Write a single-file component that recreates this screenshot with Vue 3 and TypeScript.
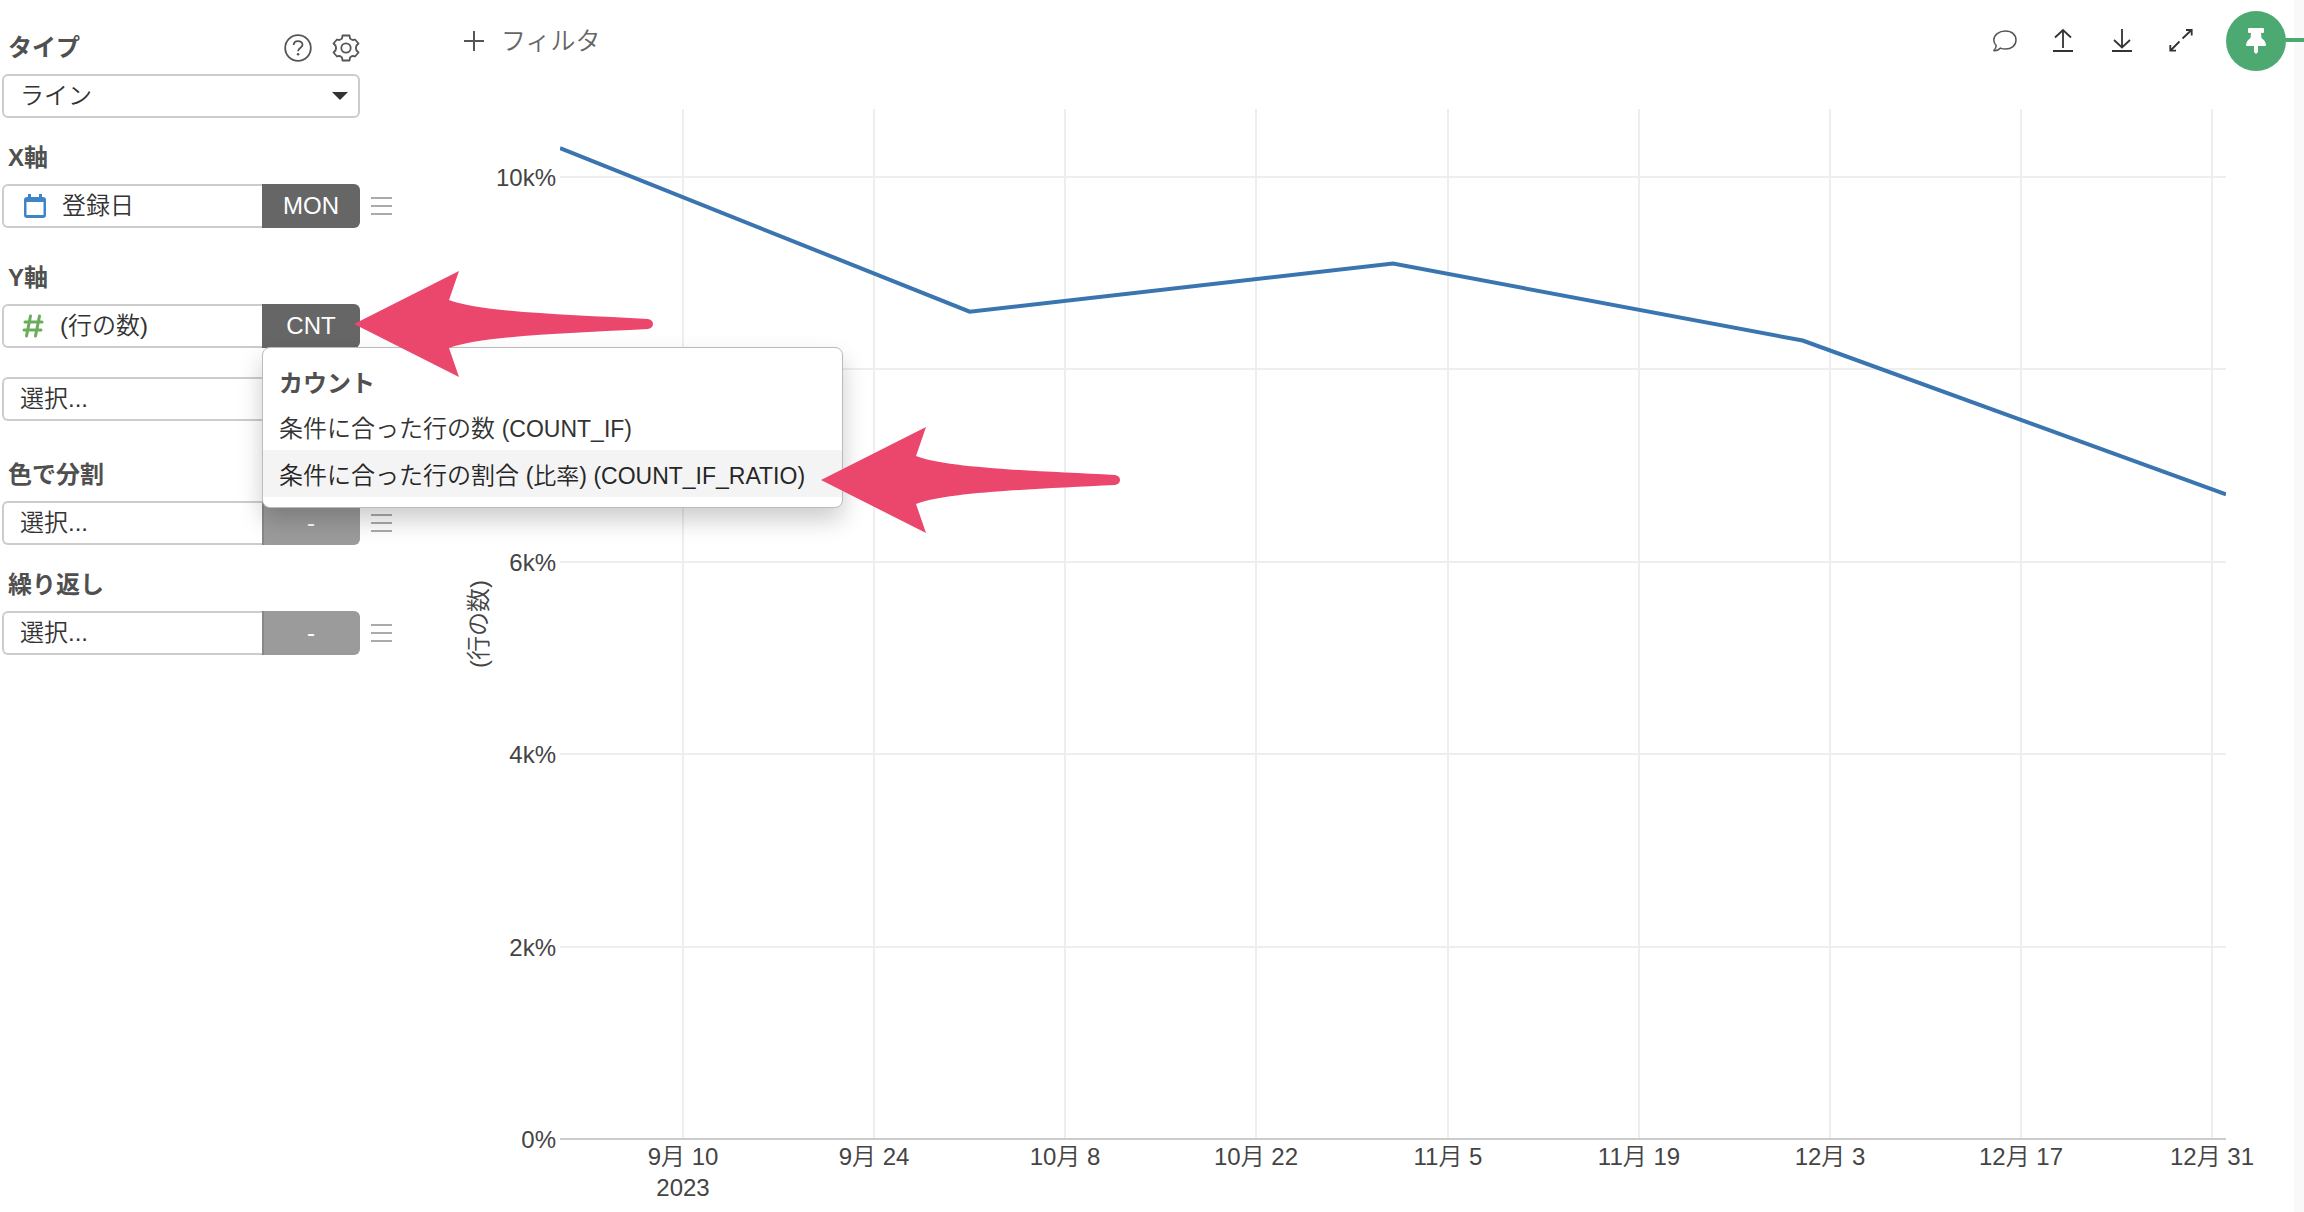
<script setup lang="ts">
import { computed, onBeforeUnmount, onMounted, ref } from 'vue'

interface Point {
  day: number
  value: number
}

const chartType = ref('line')
const chartBox = ref<HTMLElement | null>(null)
const width = ref(1874)
const height = ref(1130)
const margin = { top: 27, right: 68, bottom: 73, left: 140 }

// Days are counted from 2023-09-01.
const points: Point[] = [
  { day: 0, value: 10300 },
  { day: 30, value: 8600 },
  { day: 61, value: 9100 },
  { day: 91, value: 8300 },
  { day: 122, value: 6700 },
]
const xLabels = ['9月 10', '9月 24', '10月 8', '10月 22', '11月 5', '11月 19', '12月 3', '12月 17', '12月 31']
const maxDay = 122
const maxValue = 10707

const plotRight = computed(() => width.value - margin.right)
const plotBottom = computed(() => height.value - margin.bottom)
const plotWidth = computed(() => plotRight.value - margin.left)
const plotHeight = computed(() => plotBottom.value - margin.top)

const xAt = (day: number) => margin.left + (day / maxDay) * plotWidth.value
const yAt = (value: number) => plotBottom.value - (value / maxValue) * plotHeight.value

const xTicks = computed(() => xLabels.map((label, i) => ({ label, x: Math.round(xAt(9 + i * 14)) })))
const yTicks = computed(() =>
  [0, 2, 4, 6, 8, 10].map((k) => ({ label: k ? `${k}k%` : '0%', y: Math.round(yAt(k * 1000)), zero: k === 0 })),
)
const linePoints = computed(() => points.map((p) => `${xAt(p.day)},${yAt(p.value)}`).join(' '))

let observer: ResizeObserver | undefined
onMounted(() => {
  const el = chartBox.value
  if (!el) return
  const measure = () => {
    width.value = el.clientWidth
    height.value = el.clientHeight
  }
  measure()
  observer = new ResizeObserver(measure)
  observer.observe(el)
})
onBeforeUnmount(() => observer?.disconnect())

const arrowPath =
  'M0 53 L105 0 L95 29 C125 41 215 44 294 48 Q299 49 299 53 Q299 57 294 58 C215 62 125 65 95 77 L105 106 Z'
</script>

<template>
  <div class="page">
    <aside class="sidebar">
      <section class="group">
        <div class="head">
          <label class="title" for="chart-type">タイプ</label>
          <div class="tools">
            <button type="button" class="tool" aria-label="ヘルプ">
              <svg width="28" height="28" viewBox="0 0 28 28" fill="none" stroke="#555" stroke-width="1.8">
                <circle cx="14" cy="14" r="12.8" />
                <path d="M9.7 11 C9.7 5.8 18.5 5.9 18.5 10.7 C18.5 13.8 14.1 13.6 14.1 17.3" />
                <circle cx="14.1" cy="20.3" r="1.3" fill="#555" stroke="none" />
              </svg>
            </button>
            <button type="button" class="tool" aria-label="設定">
              <svg width="28" height="28" viewBox="0 0 28 28" fill="none" stroke="#555" stroke-width="1.8" stroke-linejoin="round">
                <circle cx="14" cy="14" r="4.7" />
                <path d="M10.5 1.5 H17.5 L18 4.5 Q20 6.8 23 5.5 L26.5 9.5 L24.5 11.5 Q23.3 14 24.5 16.5 L26.5 18.5 L23 22.5 Q20 21.2 18 23.5 L17.5 26.5 H10.5 L10 23.5 Q8 21.2 5 22.5 L1.5 18.5 L3.5 16.5 Q4.7 14 3.5 11.5 L1.5 9.5 L5 5.5 Q8 6.8 10 4.5 Z" />
              </svg>
            </button>
          </div>
        </div>
        <div class="row">
          <div class="field">
            <select id="chart-type" v-model="chartType" class="pick">
              <option value="line">ライン</option>
            </select>
            <svg class="caret" width="16" height="8" viewBox="0 0 16 8"><path d="M0 0 H16 L8 8 Z" fill="#333" /></svg>
          </div>
        </div>
      </section>

      <section class="group">
        <div class="head"><label class="title" for="x-column">X軸</label></div>
        <div class="row">
          <div class="field split">
            <svg class="kind" width="22" height="26" viewBox="0 0 22 26">
              <path d="M4 1 h3 v3 h8 v-3 h3 v3 h1 a3 3 0 0 1 3 3 v15 a3 3 0 0 1 -3 3 h-16 a3 3 0 0 1 -3 -3 v-15 a3 3 0 0 1 3 -3 h1 Z M2.5 9 v13 h17 v-13 Z" fill="#3d85c8" fill-rule="evenodd" />
            </svg>
            <select id="x-column" class="pick"><option>登録日</option></select>
          </div>
          <button type="button" class="agg">MON</button>
          <button type="button" class="grip" aria-label="X軸メニュー"><i></i><i></i><i></i></button>
        </div>
      </section>

      <section class="group y-group">
        <div class="head"><label class="title" for="y-column">Y軸</label></div>
        <div class="row">
          <div class="field split">
            <svg class="kind number" width="22" height="26" viewBox="0 0 22 26" fill="none" stroke="#69ad5a" stroke-width="3" stroke-linecap="round">
              <path d="M8.5 3 L4.5 23 M17.5 3 L13.5 23 M3 9 H20 M2 17 H19" />
            </svg>
            <select id="y-column" class="pick"><option>(行の数)</option></select>
          </div>
          <div class="agg-wrap">
            <button type="button" class="agg" aria-haspopup="menu" aria-expanded="true">CNT</button>
            <div class="menu" role="menu">
              <div class="menu-title">カウント</div>
              <button type="button" role="menuitem" class="menu-item">
                条件に合った行の数 <span class="func">(COUNT_IF)</span>
              </button>
              <button type="button" role="menuitem" class="menu-item active">
                条件に合った行の割合 <span class="func">(比率) (COUNT_IF_RATIO)</span>
              </button>
              <svg class="arrow to-item" width="299" height="106" viewBox="0 0 299 106"><path :d="arrowPath" fill="#eb466c" /></svg>
            </div>
            <svg class="arrow to-badge" width="299" height="106" viewBox="0 0 299 106"><path :d="arrowPath" fill="#eb466c" /></svg>
          </div>
        </div>
        <div class="row extra">
          <div class="field split">
            <select class="pick" aria-label="Y軸の列を追加"><option>選択...</option></select>
          </div>
          <button type="button" class="agg empty" aria-label="集計なし"></button>
        </div>
      </section>

      <section class="group color-group">
        <div class="head"><label class="title" for="color-column">色で分割</label></div>
        <div class="row">
          <div class="field split">
            <select id="color-column" class="pick"><option>選択...</option></select>
          </div>
          <button type="button" class="agg empty">-</button>
          <button type="button" class="grip" aria-label="色メニュー"><i></i><i></i><i></i></button>
        </div>
      </section>

      <section class="group">
        <div class="head"><label class="title" for="repeat-column">繰り返し</label></div>
        <div class="row">
          <div class="field split">
            <select id="repeat-column" class="pick"><option>選択...</option></select>
          </div>
          <button type="button" class="agg empty">-</button>
          <button type="button" class="grip" aria-label="繰り返しメニュー"><i></i><i></i><i></i></button>
        </div>
      </section>
    </aside>

    <main class="main">
      <header class="bar">
        <button type="button" class="filter">
          <svg width="20" height="20" viewBox="0 0 20 20" stroke="#555" stroke-width="2"><path d="M0 10 H20 M10 0 V20" /></svg>
          <span>フィルタ</span>
        </button>
        <div class="actions">
          <button type="button" class="icon-btn" aria-label="コメント">
            <svg width="26" height="24" viewBox="0 0 26 24" fill="none" stroke="#555" stroke-width="1.5" stroke-linejoin="round">
              <path d="M14.5 2 C21 2 25 6 25 11 C25 16.5 20.5 20 14.5 20 C12.5 20 11 19.7 9.5 19.1 C7.5 21 5 21.9 2.8 21.6 C4.5 20 5.200 18.3 5.200 16.5 C3.7 15 2.8 13 2.8 11 C2.8 6 8 2 14.5 2 Z" />
            </svg>
          </button>
          <button type="button" class="icon-btn" aria-label="アップロード">
            <svg width="20" height="24" viewBox="0 0 20 24" fill="none" stroke="#333" stroke-width="1.8">
              <path d="M10 19 V1 M2 8.5 L10 1 L18 8.5 M0 22 H20" />
            </svg>
          </button>
          <button type="button" class="icon-btn" aria-label="ダウンロード">
            <svg width="20" height="24" viewBox="0 0 20 24" fill="none" stroke="#333" stroke-width="1.8">
              <path d="M10 0 V18 M2 11 L10 18.5 L18 11 M0 22 H20" />
            </svg>
          </button>
          <button type="button" class="icon-btn" aria-label="拡大">
            <svg width="24" height="24" viewBox="0 0 24 24" fill="none" stroke="#333" stroke-width="1.8">
              <path d="M13.5 9.5 L22.5 1 M17 1 H22.7 V6.5 M10.5 12.5 L1.5 21.5 M1.3 16 V21.7 H7" />
            </svg>
          </button>
          <button type="button" class="pin" aria-label="ピン留め">
            <svg width="20" height="26" viewBox="0 0 20 26" fill="#fff">
              <path d="M3 0 H17 Q18 0 18 1 V4 Q18 5 17 5 H15 L15.5 10 Q19.5 12.5 20 17 Q20 18 19 18 H12 V24 L10 26 L8 24 V18 H1 Q0 18 0 17 Q0.5 12.5 4.5 10 L5 5 H3 Q2 5 2 4 V1 Q2 0 3 0 Z" />
            </svg>
          </button>
        </div>
      </header>
      <div ref="chartBox" class="chart">
        <svg class="plot" :width="width" :height="height" role="img" aria-label="(行の数)">
          <line v-for="t in xTicks" :key="t.label" class="grid" :x1="t.x" :x2="t.x" :y1="margin.top" :y2="plotBottom" />
          <line
            v-for="t in yTicks"
            :key="t.label"
            :class="t.zero ? 'zero' : 'grid'"
            :x1="margin.left"
            :x2="plotRight"
            :y1="t.y"
            :y2="t.y"
          />
          <text v-for="t in yTicks" :key="t.label" class="tick" text-anchor="end" :x="margin.left - 4" :y="t.y + 9">{{ t.label }}</text>
          <text v-for="t in xTicks" :key="t.label" class="tick" text-anchor="middle" :x="t.x" :y="plotBottom + 26">{{ t.label }}</text>
          <text class="tick" text-anchor="middle" :x="xTicks[0].x" :y="plotBottom + 57">2023</text>
          <text class="tick" text-anchor="middle" :transform="`translate(67 ${(margin.top + plotBottom) / 2}) rotate(-90)`">(行の数)</text>
          <clipPath id="plot-area">
            <rect :x="margin.left" :y="margin.top" :width="plotWidth" :height="plotHeight" />
          </clipPath>
          <polyline class="series" :points="linePoints" clip-path="url(#plot-area)" />
        </svg>
      </div>
    </main>
    <div class="rail"></div>
  </div>
</template>

<style>
body {
  background: #fff;
}
</style>

<style scoped>
.page,
.page * {
  box-sizing: border-box;
}
.page {
  display: flex;
  min-height: 100vh;
  font-family: 'Liberation Sans', 'Noto Sans CJK JP', sans-serif;
  font-size: 24px;
  font-weight: 350;
  line-height: 30px;
  color: #333;
}
button,
select {
  font: inherit;
  color: inherit;
  margin: 0;
  padding: 0;
  border: 0;
  background: none;
}
svg {
  display: block;
  flex: none;
}
.sidebar {
  position: relative;
  z-index: 2;
  flex: none;
  width: 420px;
  padding: 33px 28px 0 2px;
}
.group {
  margin-bottom: 25px;
}
.y-group {
  margin-top: 35px;
}
.color-group {
  margin-top: 39px;
}
.head {
  display: flex;
  justify-content: space-between;
  width: 358px;
  height: 30px;
  margin-bottom: 11px;
  padding-left: 6px;
}
.title,
.menu-title {
  font-weight: 700;
  color: #505050;
}
.tools {
  display: flex;
  align-items: center;
  gap: 20px;
}
.tool {
  display: flex;
}
.row {
  display: flex;
  align-items: center;
  height: 44px;
}
.extra {
  margin-top: 29px;
}
.field {
  display: flex;
  align-items: center;
  position: relative;
  width: 358px;
  height: 44px;
  border: 2px solid #ccc;
  border-radius: 6px;
}
.field.split {
  width: 260px;
  border-right: 0;
  border-radius: 6px 0 0 6px;
}
.pick {
  appearance: none;
  flex: 1;
  min-width: 0;
  height: 40px;
  padding-left: 16px;
  outline: 0;
}
.caret {
  position: absolute;
  right: 10px;
  pointer-events: none;
}
.kind {
  margin-left: 20px;
}
.kind.number {
  margin-left: 18px;
}
.agg-wrap {
  position: relative;
}
.agg {
  display: block;
  width: 98px;
  height: 44px;
  border-radius: 0 6px 6px 0;
  background: #666;
  color: #fff;
  text-align: center;
}
.agg.empty {
  background: #9b9b9b;
  box-shadow: inset 2px 0 #888;
}
.grip {
  display: flex;
  flex-direction: column;
  gap: 6px;
  width: 21px;
  margin-left: 11px;
}
.grip i {
  height: 2px;
  background: #aaa;
}
.menu {
  position: absolute;
  z-index: 1;
  top: 43px;
  left: 0;
  width: 581px;
  padding: 8px 0 10px;
  border: 1px solid #bbb;
  border-radius: 8px;
  background: #fff;
  box-shadow: 0 12px 24px rgba(0, 0, 0, 0.2);
  white-space: nowrap;
}
.menu-title {
  height: 47px;
  padding: 13px 16px 4px;
}
.menu-item {
  display: block;
  width: 100%;
  height: 47px;
  padding: 4px 16px 0;
  text-align: left;
}
.menu-item.active {
  background: #f4f4f4;
  color: #262626;
}
.func {
  font-size: 23px;
}
.arrow {
  position: absolute;
  z-index: 2;
  pointer-events: none;
}
.to-badge {
  top: -33px;
  left: 92px;
}
.to-item {
  right: -278px;
  bottom: -26px;
}
.main {
  display: flex;
  flex: 1;
  flex-direction: column;
  min-width: 0;
}
.bar {
  display: flex;
  align-items: center;
  justify-content: space-between;
  height: 82px;
  padding: 0 8px 0 44px;
}
.filter {
  display: flex;
  align-items: center;
  gap: 17px;
  color: #666;
  font-size: 25px;
}
.actions {
  display: flex;
  align-items: center;
  gap: 28px;
}
.icon-btn {
  display: flex;
  justify-content: center;
  width: 31px;
}
.pin {
  display: flex;
  align-items: center;
  justify-content: center;
  position: relative;
  width: 60px;
  height: 60px;
  margin-left: 2px;
  border-radius: 50%;
  background: #4da972;
}
.pin::after {
  content: '';
  position: absolute;
  top: 27px;
  left: 59px;
  width: 19px;
  height: 4px;
  background: #4da972;
}
.chart {
  flex: 1;
  position: relative;
  min-height: 400px;
}
.plot {
  position: absolute;
  inset: 0;
}
.grid {
  stroke: #eee;
  stroke-width: 2;
}
.zero {
  stroke: #ccc;
  stroke-width: 2;
}
.tick {
  fill: #444;
  font-size: 24px;
}
.series {
  fill: none;
  stroke: #3a75b0;
  stroke-width: 4;
}
.rail {
  width: 10px;
  background: #f9f9f9;
}
</style>
